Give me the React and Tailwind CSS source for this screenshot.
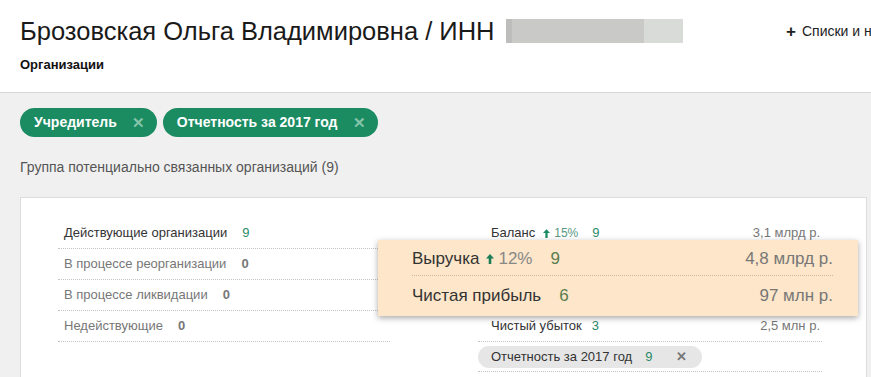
import React from 'react';

const leftRows = [
  { label: 'Действующие организации', count: '9', active: true },
  { label: 'В процессе реорганизации', count: '0' },
  { label: 'В процессе ликвидации', count: '0' },
  { label: 'Недействующие', count: '0' },
];

const Arrow = ({ className }) => (
  <svg viewBox="0 0 8 10" className={className} fill="currentColor">
    <path d="M4 0 L8 4.5 L5.3 4.5 L5.3 10 L2.7 10 L2.7 4.5 L0 4.5 Z" />
  </svg>
);

const Chip = ({ children }) => (
  <div className="flex h-[29px] items-center rounded-full bg-[#1b8b62] pl-[14px] pr-[12px] text-[14px] font-bold text-white">
    <span>{children}</span>
    <span className="ml-[15px] text-[15px] leading-none text-[#86c4ab]">✕</span>
  </div>
);

const App = () => {
  return (
    <div className="relative h-[377px] w-[871px] overflow-hidden bg-[#f0f0f0] font-['Liberation_Sans',Arial,sans-serif]">
      <header className="h-[93px] border-b border-[#d6d6d6] bg-white pl-[20px]">
        <div className="flex h-[50px] items-center pt-[12px]">
          <div className="flex w-[766px] shrink-0 items-center">
            <h1 className="shrink-0 whitespace-nowrap text-[25.5px] font-normal text-[#1a1a1a]">
              Брозовская Ольга Владимировна / ИНН
            </h1>
            <div className="ml-[12px] flex h-[24px] w-[177px] shrink-0">
              <div className="w-[6px] bg-[#bdbdbc]" />
              <div className="w-[132px] bg-[#c9c9c7]" />
              <div className="flex-1 bg-[#d8dbd8]" />
            </div>
          </div>
          <div className="flex shrink-0 items-center whitespace-nowrap text-[14px] text-[#222]">
            <span className="mr-[6px] text-[17px] font-bold leading-none">+</span>
            Списки и наблюдение
          </div>
        </div>
        <div className="pt-[5px] text-[13px] font-bold text-[#111]">Организации</div>
      </header>

      <div className="flex gap-[6px] pl-[20px] pt-[15px]">
        <Chip>Учредитель</Chip>
        <Chip>Отчетность за 2017 год</Chip>
      </div>

      <div className="pl-[20px] pt-[20px] text-[14px] text-[#555]">
        Группа потенциально связанных организаций (9)
      </div>

      <div className="ml-[20px] mt-[19px] h-[200px] w-[847px] border border-[#dcdcdc] bg-white pl-[37px] pt-[20px]">
        <div className="flex">
          <div className="w-[332px]">
            {leftRows.map((row) => (
              <div
                key={row.label}
                className="flex h-[31px] items-center border-b border-dotted border-[#c4c4c4] pl-[6px] text-[13px]"
              >
                <span className={row.active ? 'text-[#333]' : 'text-[#777]'}>{row.label}</span>
                <span
                  className={
                    row.active
                      ? 'ml-[15px] text-[#2a8b68]'
                      : 'ml-[15px] font-bold text-[#777]'
                  }
                >
                  {row.count}
                </span>
              </div>
            ))}
          </div>

          <div className="ml-[88px] w-[344px] text-[13px]">
            <div className="flex h-[31px] items-center justify-between border-b border-dotted border-[#c4c4c4] pl-[13px] pr-[2px]">
              <span className="flex items-center text-[#333]">
                Баланс
                <Arrow className="ml-[8px] mr-[4px] h-[9px] w-[7px] text-[#1b8b62]" />
                <span className="text-[12px] text-[#5a9884]">15%</span>
                <span className="ml-[14px] text-[#2a8b68]">9</span>
              </span>
              <span className="text-[#777]">3,1 млрд р.</span>
            </div>
            <div className="h-[31px] border-b border-dotted border-[#c4c4c4]" />
            <div className="h-[31px] border-b border-dotted border-[#c4c4c4]" />
            <div className="flex h-[31px] items-center justify-between border-b border-dotted border-[#c4c4c4] pl-[13px] pr-[2px]">
              <span className="text-[#333]">
                Чистый убыток
                <span className="ml-[10px] text-[#2a8b68]">3</span>
              </span>
              <span className="text-[#777]">2,5 млн р.</span>
            </div>
            <div className="flex h-[30px] items-center border-b border-dotted border-[#c4c4c4]">
              <div className="flex h-[22px] items-center rounded-full bg-[#e6e6e6] pl-[13px] pr-[15px] text-[#333]">
                Отчетность за 2017 год
                <span className="ml-[13px] text-[#2a8b68]">9</span>
                <span className="ml-[24px] text-[13px] font-bold text-[#777]">✕</span>
              </div>
            </div>
          </div>
        </div>
      </div>

      <div className="absolute left-[378px] top-[240px] w-[480px] bg-[#fde6c9] pl-[34px] pr-[25px] pt-[2px] text-[17px] shadow-[0_2px_6px_rgba(0,0,0,0.35)]">
        <div className="flex h-[34px] items-center justify-between border-b border-dotted border-[#c9b9a4]">
          <span className="flex items-center text-[#333]">
            Выручка
            <Arrow className="ml-[7px] mr-[4px] h-[10px] w-[8px] text-[#1b7d55]" />
            <span className="text-[#888]">12%</span>
            <span className="ml-[18px] text-[#5a7d4f]">9</span>
          </span>
          <span className="text-[#777]">4,8 млрд р.</span>
        </div>
        <div className="flex h-[40px] items-center justify-between">
          <span className="text-[#333]">
            Чистая прибыль
            <span className="ml-[18px] text-[#5a7d4f]">6</span>
          </span>
          <span className="text-[#777]">97 млн р.</span>
        </div>
      </div>
    </div>
  );
};

export default App;
